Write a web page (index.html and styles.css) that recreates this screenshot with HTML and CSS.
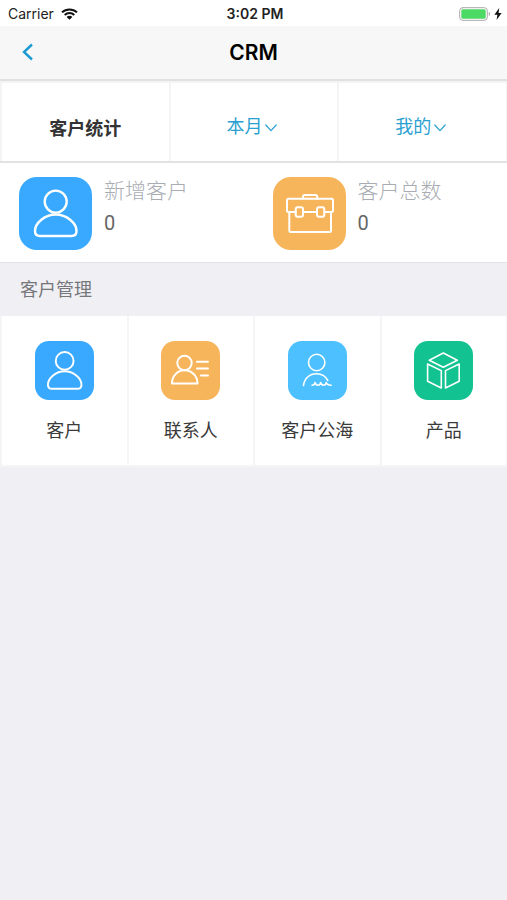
FILE: index.html
```html
<!DOCTYPE html>
<html lang="zh-CN">

<head>
    <meta charset="UTF-8">
    <meta name="viewport" content="width=device-width, initial-scale=1.0">
    <title>CRM</title>
    <link rel="stylesheet" href="styles.css">
</head>

<body>
    <!-- Shared icon -->
    <svg class="symbols" aria-hidden="true">
        <symbol id="person" viewBox="0 0 73 73">
            <circle cx="36.7" cy="24.6" r="11" />
            <path d="M36.7 37.5C26 37.5 16 46 16 54C16 57.5 18 59 21 59H52.5C55.5 59 57.5 57.5 57.5 54C57.5 46 47.5 37.5 36.7 37.5Z" />
        </symbol>
    </svg>

    <!-- Status bar -->
    <div class="status-bar">
        <div class="status-left">
            <span>Carrier</span>
            <svg class="wifi" viewBox="0 0 17 12" aria-hidden="true">
                <path d="M1 4.4C5.2 0.4 11.8 0.4 16 4.4M3.7 7C6.4 4.4 10.6 4.4 13.3 7" />
                <path class="wifi-dot" d="M5.6 8.9C7.2 7.4 9.8 7.4 11.4 8.9L8.5 11.8Z" />
            </svg>
        </div>
        <span class="status-time">3:02 PM</span>
        <div class="status-right">
            <svg class="battery" viewBox="0 0 32 14" aria-hidden="true">
                <rect class="battery-case" x="0.7" y="0.7" width="27.6" height="12.6" rx="3" />
                <rect class="battery-level" x="2.3" y="2.3" width="24.4" height="9.4" rx="1.5" />
                <path class="battery-cap" d="M29.8 4.8C31.4 5.4 31.4 8.6 29.8 9.2Z" />
            </svg>
            <svg class="bolt" viewBox="0 0 8 12" aria-hidden="true">
                <path d="M5.2 0L0.4 6.8H3.4L2.6 12L7.6 5H4.6Z" />
            </svg>
        </div>
    </div>

    <!-- Nav bar -->
    <header class="nav-bar">
        <button type="button" class="back-btn" aria-label="返回">
            <svg viewBox="0 0 12 18" aria-hidden="true"><path d="M10 1.5L2 9L10 16.5" /></svg>
        </button>
        <h1>CRM</h1>
    </header>

    <main>
        <!-- Filters -->
        <div class="filters">
            <h2 class="filter-cell">客户统计</h2>
            <div class="filter-cell">
                <select aria-label="时间">
                    <option>本月</option>
                </select>
                <svg class="chevron" viewBox="0 0 12 8" aria-hidden="true"><path d="M0.8 1L6 6.6L11.2 1" /></svg>
            </div>
            <div class="filter-cell">
                <select aria-label="范围">
                    <option>我的</option>
                </select>
                <svg class="chevron" viewBox="0 0 12 8" aria-hidden="true"><path d="M0.8 1L6 6.6L11.2 1" /></svg>
            </div>
        </div>

        <!-- Totals -->
        <div class="stats">
            <div class="stat">
                <svg class="icon icon-large blue" aria-hidden="true"><use href="#person" /></svg>
                <dl>
                    <dt>新增客户</dt>
                    <dd>0</dd>
                </dl>
            </div>
            <div class="stat">
                <svg class="icon icon-large orange" viewBox="0 0 73 73" aria-hidden="true">
                    <path d="M30 21.8V20Q30 18 32 18H42.3Q44.3 18 44.3 20V21.8" />
                    <path d="M22.7 35H15.5Q14 35 14 33.5V23.3Q14 21.8 15.5 21.8H58.5Q60 21.8 60 23.3V33.5Q60 35 58.5 35H51.3M30 35H44" />
                    <path d="M16.3 35V53.5Q16.3 55 17.8 55H56.5Q58 55 58 53.5V35" />
                    <rect x="22.7" y="30.3" width="7.3" height="9.5" rx="2" />
                    <rect x="44" y="30.3" width="7.3" height="9.5" rx="2" />
                </svg>
                <dl>
                    <dt>客户总数</dt>
                    <dd>0</dd>
                </dl>
            </div>
        </div>

        <!-- Menu -->
        <h2 class="section-title">客户管理</h2>
        <nav class="menu">
            <a href="#customers">
                <svg class="icon blue" aria-hidden="true"><use href="#person" /></svg>
                <span>客户</span>
            </a>
            <a href="#contacts">
                <svg class="icon orange" viewBox="0 0 59 59" aria-hidden="true">
                    <circle cx="23.5" cy="22" r="7.2" />
                    <path d="M23.5 29.3C16.5 29.3 11 35 11 42.4H36.5C36.5 35 30.5 29.3 23.5 29.3Z" />
                    <path d="M36 20.8H47M36 27.6H47M40 34.4H47" />
                </svg>
                <span>联系人</span>
            </a>
            <a href="#pool">
                <svg class="icon sky" viewBox="0 0 59 59" aria-hidden="true">
                    <circle cx="28.7" cy="21.5" r="8.2" />
                    <path d="M15.5 44.5C16.3 37.5 21.5 32.8 28.5 32.8C33.5 32.8 37.6 35.4 39.8 39.5" />
                    <path d="M24 44.3C25.8 44.3 26.6 43.4 27 41.6C27.6 43.4 28.6 44.3 30 44.3C31.5 44.3 32.2 43.4 32.6 41.6C33.2 43.4 34.2 44.3 35.6 44.3C37 44.3 37.8 43.4 38.2 41.6C38.8 43.4 40.4 44.3 43.2 44.3" />
                </svg>
                <span>客户公海</span>
            </a>
            <a href="#products">
                <svg class="icon green" viewBox="0 0 59 59" aria-hidden="true">
                    <path d="M29.3 12L43.3 19.3L29.3 26.3L15.3 19.3Z" />
                    <path d="M13.6 23L27.3 29.6V47L13.6 40.2Z" />
                    <path d="M45.2 23L31.5 29.6V47L45.2 40.2Z" />
                </svg>
                <span>产品</span>
            </a>
        </nav>
    </main>
</body>

</html>
```

FILE: styles.css
```css
* {
    box-sizing: border-box;
}

body {
    margin: 0;
    min-height: 100vh;
    background-color: #efeff4;
    color: #333;
    font-family: Inter, "Noto Sans CJK SC", sans-serif;
    font-size: 18px;
}

h1,
h2,
dl,
dd {
    margin: 0;
}

svg {
    display: block;
    flex: none;
    fill: none;
    stroke-linecap: round;
    stroke-linejoin: round;
}

.symbols {
    position: absolute;
    width: 0;
    height: 0;
}

/* Status bar */
.status-bar {
    display: grid;
    grid-template-columns: 1fr auto 1fr;
    align-items: center;
    height: 26px;
    padding: 1px 5px 0 8px;
    background-color: #fff;
    color: #222;
    font-size: 14px;
}

.status-left,
.status-right {
    display: flex;
    align-items: center;
    gap: 7px;
}

.status-right {
    justify-content: flex-end;
    gap: 3px;
}

.status-time {
    font-weight: 600;
}

.wifi {
    width: 17px;
    height: 12px;
    stroke: #111;
    stroke-width: 2;
    stroke-linecap: butt;
}

.wifi-dot {
    fill: #111;
    stroke: none;
}

.battery {
    width: 32px;
    height: 14px;
}

.battery-case {
    stroke: #a8a8a8;
}

.battery-level {
    fill: #4cd964;
}

.battery-cap {
    fill: #a8a8a8;
}

.bolt {
    width: 8px;
    height: 12px;
    fill: #111;
}

/* Nav bar */
.nav-bar {
    display: grid;
    grid-template-columns: 1fr auto 1fr;
    align-items: center;
    height: 55px;
    border-bottom: 2px solid #e1e1e2;
    background-color: #f7f7f7;
}

.nav-bar h1 {
    color: #000;
    font-size: 21px;
    font-weight: 600;
    line-height: 24px;
}

.back-btn {
    justify-self: start;
    padding: 6px 22px 8px;
    border: none;
    background: none;
    cursor: pointer;
}

.back-btn svg {
    width: 12px;
    height: 18px;
    stroke: #1b9ad2;
    stroke-width: 2.4;
    stroke-linecap: butt;
    stroke-linejoin: miter;
}

/* Filters */
.filters {
    display: grid;
    grid-template-columns: repeat(3, 1fr);
    gap: 2px;
    padding: 2px 1px 0 2px;
    background-color: #f4f4f5;
    border-bottom: 2px solid #e2e2e4;
}

.filter-cell {
    display: flex;
    justify-content: center;
    align-items: center;
    gap: 3px;
    height: 78px;
    padding: 9px 4px 0 0;
    background-color: #fff;
    font-size: 18px;
    font-weight: 700;
}

h2.filter-cell {
    padding-right: 0;
}

.filter-cell select {
    appearance: none;
    padding: 0;
    border: none;
    background: none;
    color: #2a9fd0;
    font-family: inherit;
    font-size: 18px;
    cursor: pointer;
}

.chevron {
    width: 12px;
    height: 8px;
    margin-top: 2px;
    stroke: #2a9fd0;
    stroke-width: 1.2;
}

/* Totals */
.stats {
    display: grid;
    grid-template-columns: 1fr 1fr;
    padding: 14px 0 12px;
    background-color: #fff;
    border-bottom: 1px solid #e4e4e8;
}

.stat {
    display: flex;
    gap: 12px;
    padding-left: 19px;
}

.stat dt {
    color: #a9adb3;
    font-size: 21px;
    font-weight: 300;
    line-height: 28px;
}

.stat dd {
    color: #666;
    font-size: 20px;
    line-height: 36px;
    font-family: Roboto, sans-serif;
}

/* Icons */
.icon {
    width: 59px;
    height: 59px;
    border-radius: 14px;
    stroke: #fff;
    stroke-width: 1.6;
}

.icon-large {
    width: 73px;
    height: 73px;
    border-radius: 18px;
}

.blue {
    background-color: #38a9ff;
    stroke-width: 2.4;
}

.orange {
    background-color: #f7b55b;
    stroke-width: 2;
}

.sky {
    background-color: #4dc0ff;
}

.green {
    background-color: #12c291;
}

/* Menu */
.section-title {
    padding: 1px 20px 0;
    color: #77777b;
    font-size: 18px;
    font-weight: 400;
    line-height: 52px;
}

.menu {
    display: grid;
    grid-template-columns: repeat(4, 1fr);
    gap: 2px;
    padding: 0 1px 2px 2px;
    background-color: #f5f5f7;
}

.menu a {
    display: flex;
    flex-direction: column;
    align-items: center;
    gap: 16px;
    padding: 25px 0 20px;
    background-color: #fff;
    color: #3a3a3a;
    line-height: 29px;
    text-decoration: none;
}
```
